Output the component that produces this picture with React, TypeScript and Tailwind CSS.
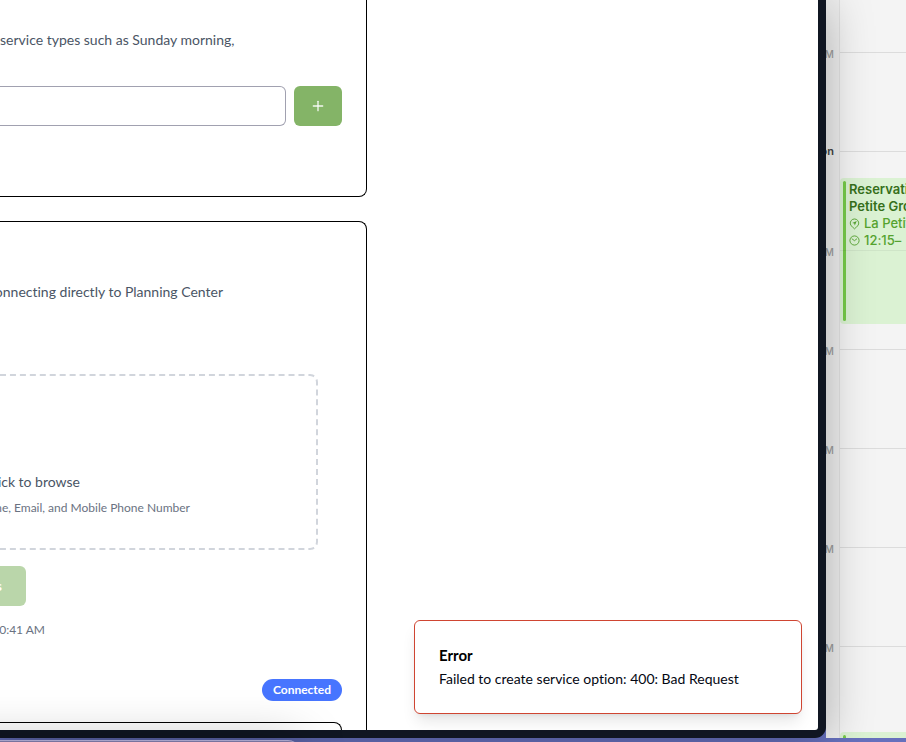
import React from "react";
import { Plus } from "lucide-react";

const hours = ["M", "on", "M", "M", "M", "M", "M"];

function ServiceTypes() {
  return (
    <section className="overflow-hidden rounded-br-lg border-r border-b border-black pt-[30px] pr-6 pb-[70px]">
      <p className="text-sm whitespace-nowrap text-gray-600">service types such as Sunday morning,</p>
      <form className="mt-9 flex gap-2" onSubmit={(e) => e.preventDefault()}>
        <input
          aria-label="Service type"
          className="h-10 min-w-0 flex-1 rounded-r-md border border-l-0 border-[#a1a1b0] px-3 text-sm outline-none"
        />
        <button
          aria-label="Add"
          className="flex h-10 w-12 items-center justify-center rounded-md bg-[#84b467] text-white/90"
        >
          <Plus size={16} strokeWidth={2} />
        </button>
      </form>
    </section>
  );
}

function ImportPeople() {
  return (
    <section className="flex-1 overflow-hidden rounded-tr-lg border-t border-r border-black pt-[60px] pr-6">
      <p className="flex w-[223px] justify-end text-sm whitespace-nowrap text-gray-600">
        onnecting directly to Planning Center
      </p>
      <div className="mt-[72px] mr-6 rounded-r-lg border-2 border-l-0 border-dashed border-gray-300 pt-24 pb-8">
        <p className="flex w-[80px] justify-end text-sm whitespace-nowrap text-gray-600">ick to browse</p>
        <p className="mt-2 flex w-[190px] justify-end text-xs whitespace-nowrap text-gray-500">
          me, Email, and Mobile Phone Number
        </p>
      </div>
      <button
        disabled
        className="mt-4 flex h-10 w-[26px] items-center justify-end rounded-r-md bg-[#bad6aa] pr-6 text-sm font-bold text-white"
      >
        s
      </button>
      <p className="mt-4 flex w-[45px] justify-end text-xs whitespace-nowrap text-gray-500">0:41 AM</p>
      <div className="mt-[41px] flex justify-end">
        <span className="rounded-full bg-[#4775ff] px-[11px] py-[3px] text-xs font-bold text-white">Connected</span>
      </div>
      <div className="mt-[21px] h-10 rounded-tr-lg border-t border-r border-black" />
    </section>
  );
}

function Toast() {
  return (
    <div
      role="alert"
      className="absolute right-4 bottom-4 w-[388px] rounded-md border border-[#cf4532] bg-white p-6 text-sm shadow-lg"
    >
      <h2 className="text-[15px] leading-5 font-bold text-black">Error</h2>
      <p className="mt-1 text-gray-950">Failed to create service option: 400: Bad Request</p>
    </div>
  );
}

function PinIcon() {
  return (
    <svg width="11" height="12" viewBox="0 0 12 13" fill="none" stroke="currentColor" className="shrink-0">
      <path d="M6 11.8 3.7 9.6A4.6 4.6 0 1 1 8.3 9.6Z" strokeWidth="1" />
      <path d="M8.5 3.2 3.5 5.4l2.2.6.6 2.2Z" fill="currentColor" stroke="none" />
    </svg>
  );
}

function ClockIcon() {
  return (
    <svg width="11" height="11" viewBox="0 0 12 12" fill="none" stroke="currentColor" className="shrink-0">
      <circle cx="6" cy="6" r="5" />
      <path d="m3.3 4.2 2.7 2 2.5-2" strokeLinecap="round" />
    </svg>
  );
}

function Calendar() {
  return (
    <aside className="relative w-20 shrink-0 overflow-hidden bg-[#f4f4f4] font-[Inter,sans-serif]">
      <div className="absolute inset-y-0 left-0 w-[14px] border-r border-black/5 bg-black/2" />
      <div className="pt-[45px]">
        {hours.map((label, i) => (
          <div key={i} className="flex h-[99px] items-start gap-[6px]">
            <span
              className={
                label === "on"
                  ? "flex w-2 justify-end text-[11px] leading-[14px] font-semibold text-[#444444]"
                  : "flex w-2 justify-end text-[10px] leading-[18px] font-medium text-[#a0a0a0]"
              }
            >
              {label}
            </span>
            <span className="mt-[7px] h-px flex-1 bg-[#dcdcdc]" />
          </div>
        ))}
      </div>
      <article className="absolute top-[178px] right-0 left-[14px] flex h-[146px] gap-[3px] overflow-hidden rounded-l bg-[#dbf2d3] py-[3px] pl-[3px] text-[13px] leading-[17px] whitespace-nowrap text-[#55a32f]">
        <div className="absolute inset-x-0 top-[72px] h-px bg-black/5" />
        <div className="w-[3px] shrink-0 rounded-full bg-[#75ca48]" />
        <div>
          <h3 className="font-semibold text-[#36701b]">
            Reservati
            <br />
            Petite Gro
          </h3>
          <p className="flex items-center gap-1 font-medium">
            <PinIcon />
            La Petit
          </p>
          <p className="flex items-center gap-1 font-medium">
            <ClockIcon />
            12:15–
          </p>
        </div>
      </article>
      <article className="absolute right-0 bottom-0 left-[14px] h-[6px] rounded-tl bg-[#dbf2d3] pt-[3px] pl-[3px]">
        <div className="h-[3px] w-[3px] rounded-t-full bg-[#75ca48]" />
      </article>
    </aside>
  );
}

export default function App() {
  return (
    <div className="relative flex h-screen flex-col overflow-hidden bg-[#6670bd] pb-1 font-[Lato,sans-serif] [font-variant-ligatures:none]">
      <div className="flex min-h-0 flex-1">
        <div className="relative z-10 flex min-w-0 flex-1 rounded-br-[11px] bg-[#101622] pr-2 pb-2 shadow-[0_4px_48px_rgba(0,0,0,0.28)]">
          <main className="relative flex flex-1 overflow-hidden rounded-br-[3px] bg-white">
            <div className="flex w-[367px] flex-col gap-6">
              <ServiceTypes />
              <ImportPeople />
            </div>
            <Toast />
          </main>
        </div>
        <Calendar />
      </div>
      <div className="absolute -bottom-10 left-[-60px] z-20 h-[42px] w-[360px] rounded-tr-xl border-t border-[#a7a3c8] bg-[#77739e] shadow-[0_0_48px_rgba(0,0,0,0.25)]" />
    </div>
  );
}
